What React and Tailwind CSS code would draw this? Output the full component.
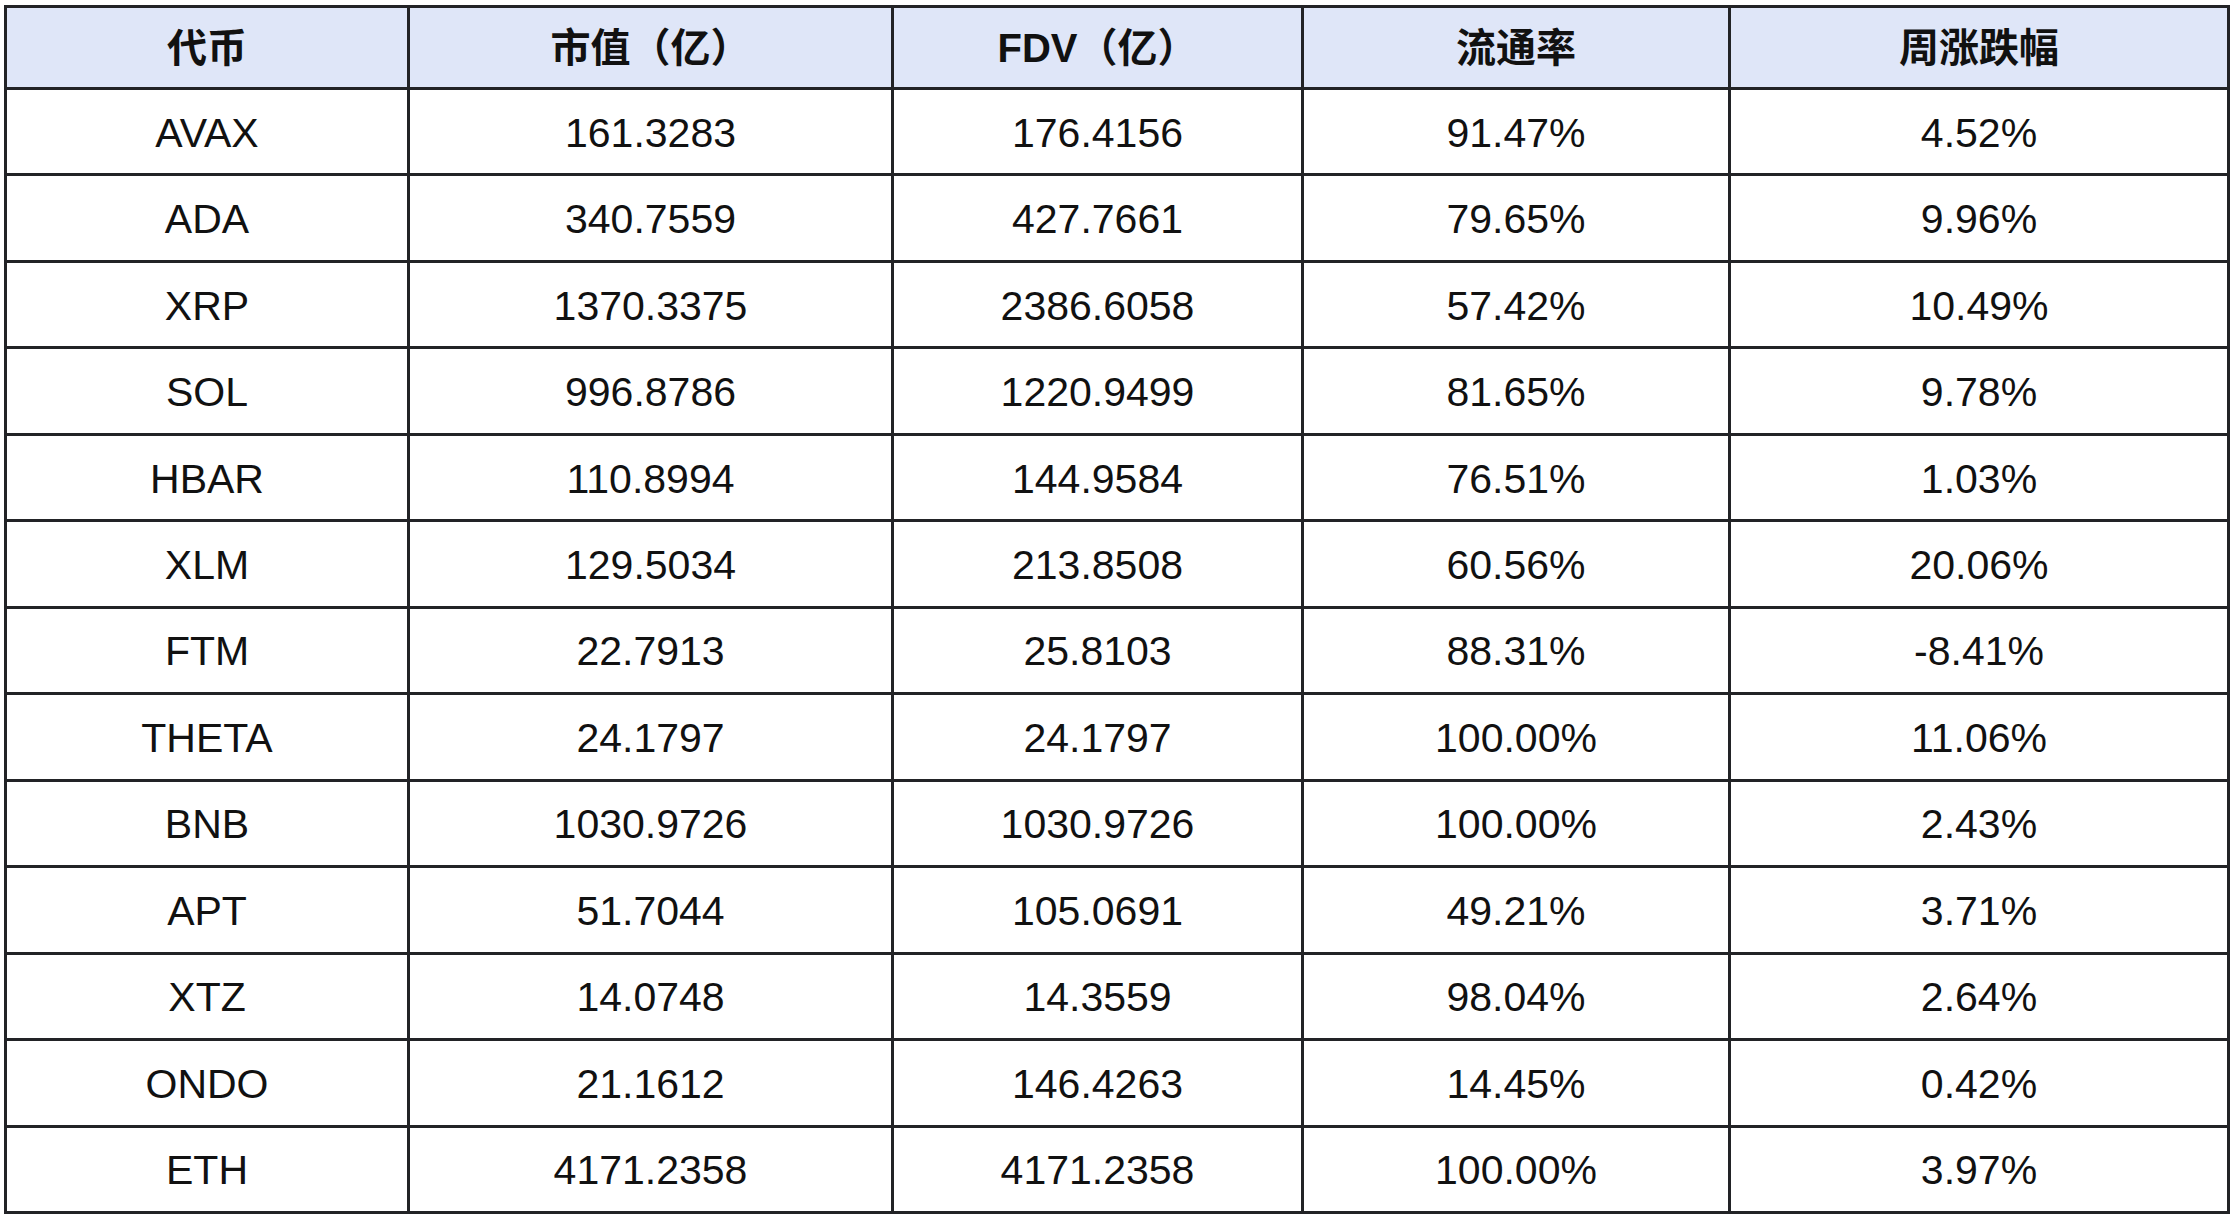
import React from 'react';

// 代币周涨跌数据表
const headers = ['代币', '市值（亿）', 'FDV（亿）', '流通率', '周涨跌幅'];

const rows = [
  ['AVAX', '161.3283', '176.4156', '91.47%', '4.52%'],
  ['ADA', '340.7559', '427.7661', '79.65%', '9.96%'],
  ['XRP', '1370.3375', '2386.6058', '57.42%', '10.49%'],
  ['SOL', '996.8786', '1220.9499', '81.65%', '9.78%'],
  ['HBAR', '110.8994', '144.9584', '76.51%', '1.03%'],
  ['XLM', '129.5034', '213.8508', '60.56%', '20.06%'],
  ['FTM', '22.7913', '25.8103', '88.31%', '-8.41%'],
  ['THETA', '24.1797', '24.1797', '100.00%', '11.06%'],
  ['BNB', '1030.9726', '1030.9726', '100.00%', '2.43%'],
  ['APT', '51.7044', '105.0691', '49.21%', '3.71%'],
  ['XTZ', '14.0748', '14.3559', '98.04%', '2.64%'],
  ['ONDO', '21.1612', '146.4263', '14.45%', '0.42%'],
  ['ETH', '4171.2358', '4171.2358', '100.00%', '3.97%'],
];

export default function App() {
  return (
    <div className="min-h-screen w-full bg-white pl-[4px] pt-[5px]">
      <div
        className="grid h-[1209px] w-[2226px] grid-cols-[400px_481px_407px_424px_496px] grid-rows-[79px_repeat(13,minmax(0,1fr))] gap-[3px] bg-[#222326] p-[3px] text-[#111111]"
        style={{ fontFamily: '"Liberation Sans", Arial, "Noto Sans CJK SC", sans-serif' }}
      >
        {headers.map((h) => (
          <div
            key={h}
            className="flex items-center justify-center bg-[#dfe6f8] text-[40px] font-bold leading-none"
          >
            {h}
          </div>
        ))}
        {rows.map((row) =>
          row.map((cell, i) => (
            <div
              key={row[0] + i}
              className="flex items-center justify-center bg-white pt-[3px] text-[41px] leading-none"
            >
              {cell}
            </div>
          ))
        )}
      </div>
    </div>
  );
}
